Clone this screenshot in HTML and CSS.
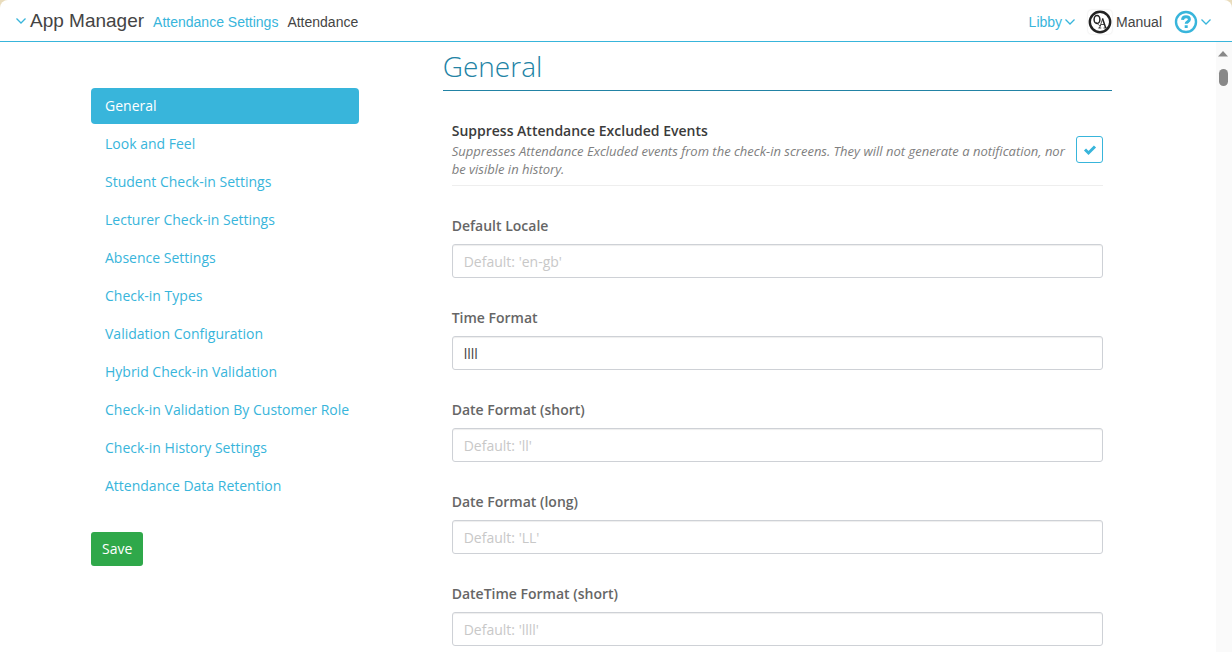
FILE: index.html
```html
<!DOCTYPE html>
<html lang="en">
<head>
<meta charset="utf-8">
<meta name="viewport" content="width=device-width, initial-scale=1">
<title>App Manager - Attendance Settings</title>
<link rel="stylesheet" href="styles.css">
</head>
<body>
<div class="window">
  <header class="topbar">
    <nav class="crumbs" aria-label="Breadcrumb">
      <button class="app-menu" type="button">
        <svg class="chevron" viewBox="0 0 12 8" aria-hidden="true"><path d="M1.500 1.500 6 6l4.500-4.500"/></svg>
        <span>App Manager</span>
      </button>
      <a class="crumb-link" href="#">Attendance Settings</a>
      <span>Attendance</span>
    </nav>
    <div class="account">
      <button class="user-menu" type="button">Libby<svg class="chevron" viewBox="0 0 12 8" aria-hidden="true"><path d="M1.500 1.500 6 6l4.500-4.500"/></svg></button>
      <a class="manual" href="#">
        <svg class="logo" viewBox="0 0 24 24" aria-hidden="true">
          <circle class="logo-ring" cx="12" cy="12" r="10.200"/>
          <ellipse class="logo-q" cx="9" cy="9.500" rx="2.900" ry="4"/>
          <path class="logo-thin" d="M8 12.500c2 .5 2.500 4 5 3M11.500 18l3.200-9.500M13 14.500h4M10.300 18h3M15.500 18h4"/>
          <path class="logo-thick" d="m14.500 8.500 3.200 9.500"/>
        </svg>
        <span>Manual</span>
      </a>
      <button class="help-menu" type="button" aria-label="Help">
        <svg class="help" viewBox="0 0 24 24" aria-hidden="true">
          <circle cx="12" cy="12" r="10"/>
          <path class="help-mark" d="M8.500 9.800c.2-2.100 1.500-3.100 3.500-3.100 2 0 3.400 1.100 3.400 2.700 0 2.300-3.200 2.200-3.200 4.300"/>
          <path class="help-mark" d="M12.200 15.300v2.800"/>
        </svg>
        <svg class="chevron" viewBox="0 0 12 8" aria-hidden="true"><path d="M1.500 1.500 6 6l4.500-4.500"/></svg>
      </button>
    </div>
  </header>
  <div class="body">
    <form class="page">
      <aside class="side">
        <nav class="sections" aria-label="Sections">
          <a class="section active" href="#general">General</a>
          <a class="section" href="#">Look and Feel</a>
          <a class="section" href="#">Student Check-in Settings</a>
          <a class="section" href="#">Lecturer Check-in Settings</a>
          <a class="section" href="#">Absence Settings</a>
          <a class="section" href="#">Check-in Types</a>
          <a class="section" href="#">Validation Configuration</a>
          <a class="section" href="#">Hybrid Check-in Validation</a>
          <a class="section" href="#">Check-in Validation By Customer Role</a>
          <a class="section" href="#">Check-in History Settings</a>
          <a class="section" href="#">Attendance Data Retention</a>
        </nav>
        <button class="save" type="button">Save</button>
      </aside>
      <main class="content" id="general">
        <h1 class="title">General</h1>
        <div class="fields">
          <div class="toggle-row">
            <div class="toggle-text">
              <label class="toggle-label" for="suppress">Suppress Attendance Excluded Events</label>
              <p class="hint" id="suppress-hint">Suppresses Attendance Excluded events from the check-in screens. They will not generate a notification, nor be visible in history.</p>
            </div>
            <span class="check">
              <input class="check-input" type="checkbox" id="suppress" aria-describedby="suppress-hint" checked>
              <svg class="check-mark" viewBox="0 0 14 12" aria-hidden="true"><path d="m2 5.500 3.500 3.500L12 2.500"/></svg>
            </span>
          </div>
          <div class="field"><label class="label" for="locale">Default Locale</label><input class="input" type="text" id="locale" placeholder="Default: 'en-gb'"></div>
          <div class="field"><label class="label" for="time">Time Format</label><input class="input" type="text" id="time" value="llll"></div>
          <div class="field"><label class="label" for="date-short">Date Format (short)</label><input class="input" type="text" id="date-short" placeholder="Default: 'll'"></div>
          <div class="field"><label class="label" for="date-long">Date Format (long)</label><input class="input" type="text" id="date-long" placeholder="Default: 'LL'"></div>
          <div class="field"><label class="label" for="datetime-short">DateTime Format (short)</label><input class="input" type="text" id="datetime-short" placeholder="Default: 'llll'"></div>
        </div>
      </main>
    </form>
    <div class="track" aria-hidden="true">
      <svg class="arrow" viewBox="0 0 10 6"><path d="M0 5.500 5 0l5 5.500z"/></svg>
      <span class="thumb"></span>
    </div>
  </div>
</div>
</body>
</html>
```
FILE: styles.css
```css
* { box-sizing: border-box; }
body {
  margin: 0;
  background: #e9dcbc;
  font-family: "Open Sans", "Noto Sans", sans-serif;
  font-size: 14px;
  line-height: 20px;
  color: #444;
}
button, input { font: inherit; color: inherit; }
button { background: none; border: 0; padding: 0; }
a { color: #38b5db; text-decoration: none; }
.window {
  display: flex;
  flex-direction: column;
  height: 100vh;
  overflow: hidden;
  background: #fff;
  border-radius: 8px 8px 0 0;
}
.topbar {
  display: flex;
  flex: none;
  justify-content: space-between;
  align-items: center;
  height: 42px;
  padding: 2px 20px 0 15px;
  border-bottom: 1px solid #38b5db;
  font-family: "Liberation Sans", Arial, sans-serif;
  font-size: 14px;
}
.crumbs { display: flex; align-items: center; gap: 9px; }
.app-menu { display: flex; align-items: center; gap: 3px; padding-bottom: 2px; font-size: 19px; }
.account, .user-menu, .manual, .help-menu { display: flex; align-items: center; }
.account { gap: 12px; }
.user-menu { gap: 2px; color: #38b5db; }
.manual { gap: 4px; color: #444; }
.help-menu { gap: 2px; }
.chevron { width: 12px; height: 8px; fill: none; stroke: #38b5db; stroke-width: 1.3; }
.logo { width: 24px; height: 24px; fill: none; stroke: #222; border-radius: 4px; box-shadow: 0 0 2px #ddd; }
.logo-ring { stroke-width: 2.4; }
.logo-q, .logo-thick { stroke-width: 1.5; }
.logo-thin { stroke-width: 0.8; }
.help { width: 24px; height: 24px; fill: none; stroke: #38b5db; stroke-width: 2.4; }
.help-mark { stroke-width: 3; }
.body { display: flex; flex: 1; min-height: 0; }
.page {
  display: grid;
  grid-template-columns: 2fr 5fr;
  gap: 84px;
  flex: 1;
  align-items: start;
  padding: 8px 104px 8px 91px;
  overflow-y: auto;
  scrollbar-width: none;
}
.side { padding-top: 38px; }
.sections { display: flex; flex-direction: column; gap: 2px; margin-bottom: 28px; }
.section { padding: 8px 4px 8px 14px; border-radius: 4px; }
.active { background: #38b5db; color: #fff; }
.save { height: 34px; padding: 0 11px; border-radius: 3px; background: #2fa84a; color: #fff; }
.title {
  margin: 0 0 30px;
  padding-bottom: 8px;
  border-bottom: 1px solid #2283a5;
  color: #2283a5;
  font-size: 28px;
  font-weight: 300;
  line-height: 32px;
}
.fields { display: flex; flex-direction: column; gap: 30px; padding: 0 9px; }
.toggle-row {
  display: flex;
  align-items: center;
  gap: 4px;
  padding-bottom: 7px;
  border-bottom: 1px solid #eee;
}
.toggle-text { flex: 1; }
.toggle-label { display: block; color: #3b3b3b; font-weight: 600; }
.hint { margin: 1px 0 0; color: #808080; font-size: 13px; font-style: italic; line-height: 18px; }
.check { display: grid; width: 27px; height: 27px; }
.check-input {
  grid-area: 1 / 1;
  width: 27px;
  height: 27px;
  margin: 0;
  appearance: none;
  border: 1px solid #38b5db;
  border-radius: 3px;
  background: #fff;
}
.check-mark { grid-area: 1 / 1; place-self: center; width: 14px; height: 12px; fill: none; stroke: #38b5db; stroke-width: 3; pointer-events: none; visibility: hidden; }
.check-input:checked + .check-mark { visibility: visible; }
.field { display: flex; flex-direction: column; gap: 8px; }
.label { color: #666; font-weight: 600; }
.input {
  width: 100%;
  height: 34px;
  padding: 0 11px;
  border: 1px solid #ced1d6;
  border-radius: 3px;
  background: #fff;
  box-shadow: inset 0 1px 1px #eee;
}
.input::placeholder { color: #c8c8c8; opacity: 1; }
.track { display: flex; flex-direction: column; align-items: center; gap: 12px; width: 16px; padding: 9px 2px 0 0; background: #fafafa; }
.arrow { width: 10px; height: 6px; fill: #888; }
.thumb { width: 9px; height: 17px; border-radius: 5px; background: #888; }
```
